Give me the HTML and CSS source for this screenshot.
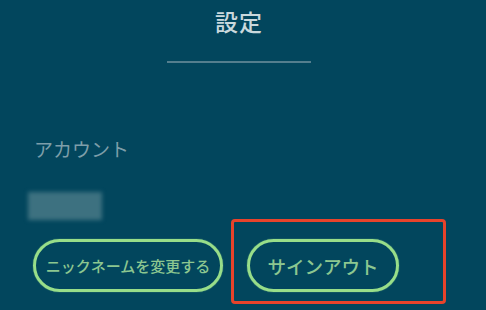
FILE: index.html
```html
<!DOCTYPE HTML>
<html>
<head>
  <meta charset="UTF-8">
  <title>設定</title>
  <meta name="viewport" content="width=device-width, initial-scale=1">
  <link rel="stylesheet" href="styles.css">
</head>
<body>
  <div class="screen">
    <header class="header">
      <h1 class="title">設定</h1>
      <div class="divider"></div>
    </header>

    <section class="account">
      <h2 class="section-label">アカウント</h2>
      <div class="nickname-blur"></div>
      <div class="actions">
        <button class="pill-button nick">ニックネームを変更する</button>
        <button class="pill-button signout">サインアウト</button>
      </div>
    </section>

    <div class="highlight"></div>
  </div>
</body>
</html>
```

FILE: styles.css
```css
body {
  margin: 0;
  background: #02465d;
  font-family: "Noto Sans CJK JP", "Noto Sans", sans-serif;
}

.screen {
  position: relative;
  width: 486px;
  height: 310px;
  overflow: hidden;
  background: #02465d;
}

.header {
  display: flex;
  flex-direction: column;
  align-items: center;
  padding: 5px 8px 0 0;
}

.title {
  margin: 0;
  font-size: 23px;
  font-weight: 500;
  line-height: 32px;
  color: #cad9dd;
  letter-spacing: 1px;
}

.divider {
  width: 144px;
  height: 2px;
  margin-top: 24px;
  background: #547e8e;
}

.account {
  padding: 0 0 0 33px;
}

.section-label {
  margin: 73px 0 0 1px;
  font-size: 19px;
  font-weight: 400;
  line-height: 26px;
  color: #7d9ea9;
}

.nickname-blur {
  width: 74px;
  height: 28px;
  margin: 30px 0 0 -5px;
  background: #3d7180;
  filter: blur(2px);
}

.actions {
  display: flex;
  gap: 24px;
  margin-top: 19px;
}

.pill-button {
  height: 53px;
  padding: 0;
  background: transparent;
  border: 3px solid #98de89;
  border-radius: 27px;
  font-family: "Noto Sans CJK JP", "Noto Sans", sans-serif;
  color: #8cc790;
  box-shadow: 0 0 1px #98de89;
}

.nick {
  width: 190px;
  font-size: 15px;
  font-weight: 500;
}

.signout {
  width: 152px;
  font-size: 18.5px;
  font-weight: 500;
}

.highlight {
  position: absolute;
  left: 231px;
  top: 219px;
  width: 209px;
  height: 79px;
  border: 3px solid #e8432b;
  border-radius: 4px;
}
```
